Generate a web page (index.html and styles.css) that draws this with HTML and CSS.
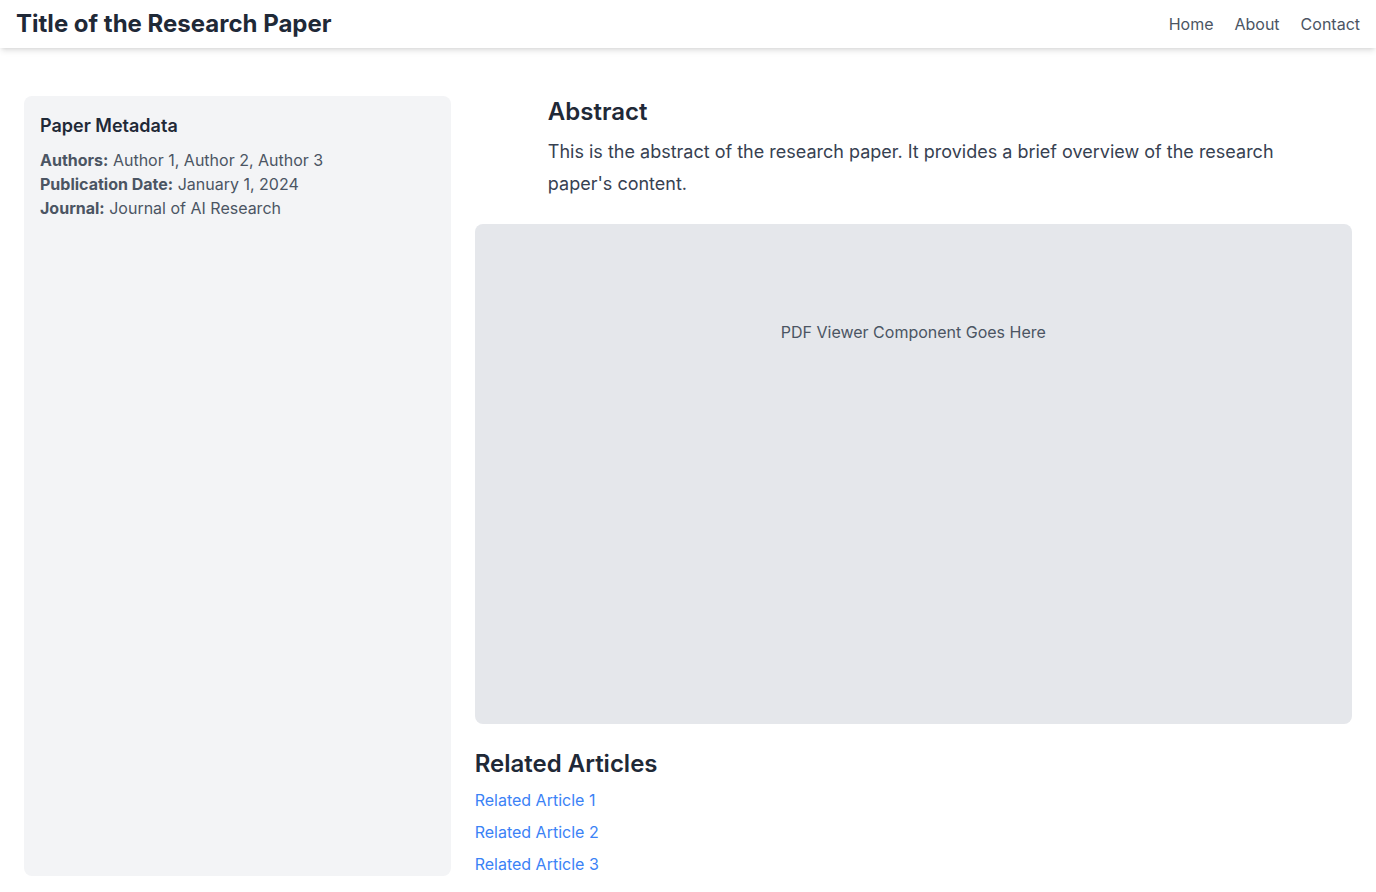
FILE: index.html
```html
<!DOCTYPE html>
<html lang="en">
<head>
<meta charset="utf-8">
<title>Title of the Research Paper</title>
<link rel="stylesheet" href="styles.css">
</head>
<body>
<header class="topbar">
  <h1 class="site-title">Title of the Research Paper</h1>
  <nav class="nav">
    <a href="#" class="nav-link">Home</a>
    <a href="#" class="nav-link">About</a>
    <a href="#" class="nav-link">Contact</a>
  </nav>
</header>
<main class="page">
  <aside class="sidebar">
    <h2 class="sidebar-title">Paper Metadata</h2>
    <p class="meta"><strong>Authors:</strong> Author 1, Author 2, Author 3</p>
    <p class="meta"><strong>Publication Date:</strong> January 1, 2024</p>
    <p class="meta"><strong>Journal:</strong> Journal of AI Research</p>
  </aside>
  <section class="content">
    <article class="abstract">
      <h2 class="section-title">Abstract</h2>
      <p class="abstract-text">This is the abstract of the research paper. It provides a brief overview of the research paper's content.</p>
    </article>
    <div class="pdf-viewer">PDF Viewer Component Goes Here</div>
    <div class="related">
      <h2 class="section-title">Related Articles</h2>
      <ul class="related-list">
        <li><a href="#" class="related-link">Related Article 1</a></li>
        <li><a href="#" class="related-link">Related Article 2</a></li>
        <li><a href="#" class="related-link">Related Article 3</a></li>
      </ul>
    </div>
  </section>
</main>
</body>
</html>
```
FILE: styles.css
```css
* { box-sizing: border-box; }
html, body { margin: 0; padding: 0; }
body {
  font-family: Inter, "Noto Sans", sans-serif;
  background: #ffffff;
  color: #1f2937;
}
.topbar {
  height: 48px;
  display: flex;
  align-items: center;
  justify-content: space-between;
  padding: 0 16px;
  background: #ffffff;
  box-shadow: 0 4px 6px -1px rgba(0,0,0,0.1), 0 2px 4px -2px rgba(0,0,0,0.1);
  position: relative;
  z-index: 1;
}
.site-title {
  margin: 0;
  font-size: 24px;
  line-height: 32px;
  font-weight: 700;
  color: #1f2937;
}
.nav {
  display: flex;
  gap: 21px;
}
.nav-link {
  font-size: 16px;
  line-height: 24px;
  color: #4b5563;
  text-decoration: none;
}
.page {
  display: grid;
  grid-template-columns: repeat(3, 1fr);
  gap: 24px;
  padding: 48px 24px 16px;
}
.sidebar {
  grid-column: span 1;
  background: #f3f4f6;
  border-radius: 8px;
  padding: 16px;
}
.sidebar-title {
  margin: 0 0 8px;
  font-size: 18px;
  line-height: 28px;
  font-weight: 600;
  color: #1f2937;
}
.meta {
  margin: 0;
  font-size: 16px;
  line-height: 24px;
  color: #4b5563;
}
.meta strong { font-weight: 700; }
.content {
  grid-column: span 2;
  display: flex;
  flex-direction: column;
}
.abstract {
  max-width: 731px;
  width: 100%;
  margin: 0 auto;
}
.section-title {
  margin: 0;
  font-size: 24px;
  line-height: 32px;
  font-weight: 600;
  color: #1f2937;
}
.abstract-text {
  margin: 8px 0 0;
  font-size: 18px;
  line-height: 32px;
  color: #374151;
}
.pdf-viewer {
  margin-top: 24px;
  height: 500px;
  background: #e5e7eb;
  border-radius: 8px;
  padding: 96px 24px;
  text-align: center;
  font-size: 16px;
  line-height: 24px;
  color: #4b5563;
}
.related { margin-top: 24px; }
.related-list {
  list-style: none;
  margin: 8px 0 0;
  padding: 0;
  display: flex;
  flex-direction: column;
  gap: 8px;
}
.related-link {
  font-size: 16px;
  line-height: 24px;
  color: #3b82f6;
  text-decoration: none;
}
```
